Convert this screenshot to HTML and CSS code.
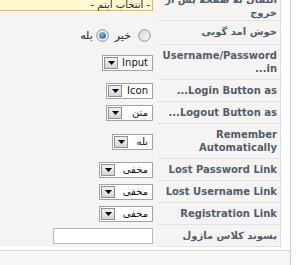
FILE: index.html
```html
<!DOCTYPE html>
<html lang="fa">
<head>
<meta charset="utf-8">
<link rel="stylesheet" href="styles.css">
</head>
<body>
<div class="panel">
  <div class="params">
    <div class="row">
      <div class="key key-first">انتقال به صفحه پس از خروج</div>
      <div class="val val-top"><span class="listbox">- انتخاب آیتم -</span></div>
    </div>
    <div class="row">
      <div class="key">خوش امد گویی</div>
      <div class="val val-radio">
        <span class="radio"><svg width="13" height="13" viewBox="0 0 13 13"><defs><linearGradient id="rg1" x1="0" y1="0" x2="1" y2="1"><stop offset="0" stop-color="#d8d8d8"/><stop offset="1" stop-color="#f8f8f8"/></linearGradient></defs><circle cx="6.5" cy="6.5" r="5.8" fill="url(#rg1)" stroke="#8e8f8f" stroke-width="1"/></svg></span>
        <span class="rlabel r1">خیر</span>
        <span class="radio r2"><svg width="13" height="13" viewBox="0 0 13 13"><defs><radialGradient id="rg2" cx="0.4" cy="0.35" r="0.7"><stop offset="0" stop-color="#7fc0f0"/><stop offset="1" stop-color="#1c5a9a"/></radialGradient></defs><circle cx="6.5" cy="6.5" r="5.8" fill="#ececec" stroke="#8e8f8f" stroke-width="1"/><circle cx="6.5" cy="6.5" r="3.3" fill="url(#rg2)"/></svg></span>
        <span class="rlabel r3">بله</span>
      </div>
    </div>
    <div class="row">
      <div class="key">Username/Password in...</div>
      <div class="val"><span class="sel w-input"><span class="txt">Input</span><span class="btn"><svg width="7" height="4" viewBox="0 0 7 4"><path d="M0 0h7L3.5 4z"/></svg></span></span></div>
    </div>
    <div class="row">
      <div class="key">Login Button as...</div>
      <div class="val"><span class="sel w-icon"><span class="txt">Icon</span><span class="btn"><svg width="7" height="4" viewBox="0 0 7 4"><path d="M0 0h7L3.5 4z"/></svg></span></span></div>
    </div>
    <div class="row">
      <div class="key">Logout Button as...</div>
      <div class="val"><span class="sel w-icon"><span class="txt">متن</span><span class="btn"><svg width="7" height="4" viewBox="0 0 7 4"><path d="M0 0h7L3.5 4z"/></svg></span></span></div>
    </div>
    <div class="row">
      <div class="key">Remember Automatically</div>
      <div class="val"><span class="sel w-yes"><span class="txt">بله</span><span class="btn"><svg width="7" height="4" viewBox="0 0 7 4"><path d="M0 0h7L3.5 4z"/></svg></span></span></div>
    </div>
    <div class="row">
      <div class="key">Lost Password Link</div>
      <div class="val"><span class="sel w-hide"><span class="txt">مخفی</span><span class="btn"><svg width="7" height="4" viewBox="0 0 7 4"><path d="M0 0h7L3.5 4z"/></svg></span></span></div>
    </div>
    <div class="row">
      <div class="key">Lost Username Link</div>
      <div class="val"><span class="sel w-hide"><span class="txt">مخفی</span><span class="btn"><svg width="7" height="4" viewBox="0 0 7 4"><path d="M0 0h7L3.5 4z"/></svg></span></span></div>
    </div>
    <div class="row">
      <div class="key">Registration Link</div>
      <div class="val"><span class="sel w-hide"><span class="txt">مخفی</span><span class="btn"><svg width="7" height="4" viewBox="0 0 7 4"><path d="M0 0h7L3.5 4z"/></svg></span></span></div>
    </div>
    <div class="row">
      <div class="key">پسوند کلاس ماژول</div>
      <div class="val"><span class="textbox"></span></div>
    </div>
  </div>
</div>
<div class="next"></div>
</body>
</html>
```

FILE: styles.css
```css
html, body {
  margin: 0;
  padding: 0;
}
body {
  background: #ffffff;
  width: 298px;
  height: 265px;
  overflow: hidden;
  font-family: "DejaVu Sans", sans-serif;
}
.panel {
  width: 290px;
  border-right: 1px solid #cfcfcf;
  background: #ffffff;
  padding-bottom: 2px;
}
.params {
  width: 281px;
  background: #f4f4f4;
  margin-top: -11px;
  direction: rtl;
}
.row {
  display: grid;
  grid-template-columns: 123px 1fr;
}
.key {
  padding: 4px 3px;
  line-height: 13px;
  font-size: 10px;
  font-weight: bold;
  color: #525d6b;
  text-align: right;
  border-bottom: 1px solid #e2e2e2;
  border-right: 1px solid #dcdcdc;
}
.key-first {
  padding-bottom: 1px;
}
.val {
  display: flex;
  align-items: center;
  justify-content: flex-start;
  padding: 3px 5px 3px 0;
  min-width: 0;
}
.val-top {
  align-items: flex-start;
}
.val-radio {
  align-items: flex-start;
  padding-top: 8px;
}
.listbox {
  flex: none;
  width: 180px;
  height: 12px;
  margin-top: 2px;
  padding: 3px 2px 0 0;
  line-height: 14px;
  border: 1px solid #e6b64a;
  background: #fff8d2;
  font-size: 10px;
  color: #222;
  white-space: nowrap;
}
.radio {
  display: block;
  width: 13px;
  height: 13px;
  margin-right: 2px;
}
.radio svg {
  display: block;
}
.rlabel {
  font-size: 11px;
  line-height: 13px;
  color: #222;
}
.r1 {
  margin-right: 7px;
}
.r2 {
  margin-right: 6px;
}
.r3 {
  margin-right: 3px;
}
.sel {
  display: flex;
  flex: none;
  direction: rtl;
  align-items: stretch;
  height: 16px;
  box-sizing: border-box;
  border: 1px solid #a3a3a3;
  background: #ffffff;
}
.w-input { width: 51px; }
.w-icon { width: 47px; }
.w-yes { width: 41px; }
.w-hide { width: 54px; }
.sel .txt {
  flex: 1;
  font-size: 10px;
  line-height: 14px;
  color: #111;
  padding-right: 4px;
  text-align: right;
  white-space: nowrap;
}
.sel .btn {
  width: 14px;
  margin: 1px;
  box-sizing: border-box;
  border: 1px solid #8f8f8f;
  background: linear-gradient(#f2f2f2, #d6d6d6);
  display: flex;
  justify-content: center;
  align-items: flex-end;
  padding-bottom: 3px;
}
.sel .btn svg {
  display: block;
}
.textbox {
  display: block;
  width: 100px;
  height: 16px;
  box-sizing: border-box;
  border: 1px solid #b9b9b9;
  background: #ffffff;
}
.next {
  width: 290px;
  height: 20px;
  border-top: 1px solid #d6d6d6;
  border-right: 1px solid #cfcfcf;
  background: #f6f6f6;
  margin-top: 1px;
}
```
